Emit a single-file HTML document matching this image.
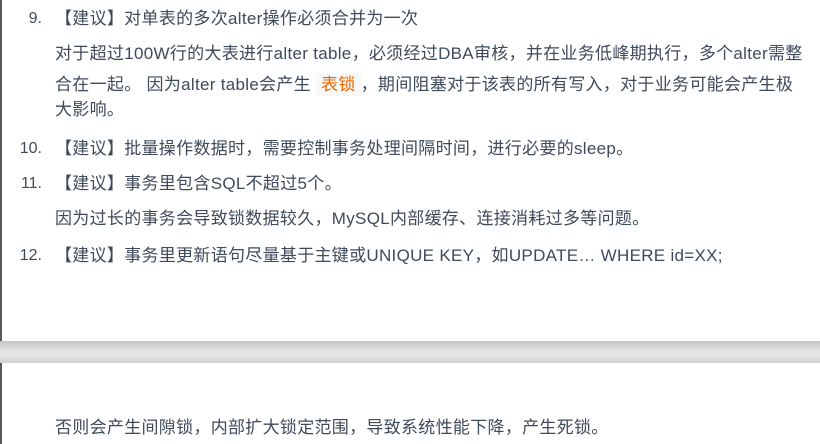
<!DOCTYPE html>
<html><head><meta charset="utf-8"><style>
html,body{margin:0;padding:0;background:#fff;}
body{width:820px;height:444px;position:relative;overflow:hidden;font-family:"Liberation Sans","Noto Sans CJK SC",sans-serif;font-size:17px;letter-spacing:0.3px;color:#3f4a5a;}
.lb{position:absolute;left:0;top:0;width:2px;height:444px;background:#5a5a5a;}
.l,.n{position:absolute;white-space:nowrap;line-height:22px;height:22px;}
.l{left:55px;}
.n{width:42px;left:0;text-align:right;font-size:16px;letter-spacing:0;}
.code{color:#e96900;background:#f8f8f8;padding:2px 5px;border-radius:2px;}
.band{position:absolute;left:0;top:341px;width:820px;height:22px;background:linear-gradient(#c4c4c4,#e2e2e2 40%,#e4e4e4 70%,#cfcfcf);}
</style></head><body>
<div class="lb"></div>
<div class="n" style="top:8px">9.</div><div class="l" style="top:8px">【建议】对单表的多次alter操作必须合并为一次</div>
<div class="l" style="top:43px">对于超过100W行的大表进行alter table，必须经过DBA审核，并在业务低峰期执行，多个alter需整</div>
<div class="l" style="top:74px">合在一起。 因为alter table会产生 <span class="code">表锁</span>，期间阻塞对于该表的所有写入，对于业务可能会产生极</div>
<div class="l" style="top:99px">大影响。</div>
<div class="n" style="top:138px">10.</div><div class="l" style="top:138px">【建议】批量操作数据时，需要控制事务处理间隔时间，进行必要的sleep。</div>
<div class="n" style="top:173px">11.</div><div class="l" style="top:173px">【建议】事务里包含SQL不超过5个。</div>
<div class="l" style="top:208px">因为过长的事务会导致锁数据较久，MySQL内部缓存、连接消耗过多等问题。</div>
<div class="n" style="top:245px">12.</div><div class="l" style="top:245px">【建议】事务里更新语句尽量基于主键或UNIQUE KEY，如UPDATE… WHERE id=XX;</div>
<div class="band"></div>
<div class="l" style="top:417px">否则会产生间隙锁，内部扩大锁定范围，导致系统性能下降，产生死锁。</div>
</body></html>
